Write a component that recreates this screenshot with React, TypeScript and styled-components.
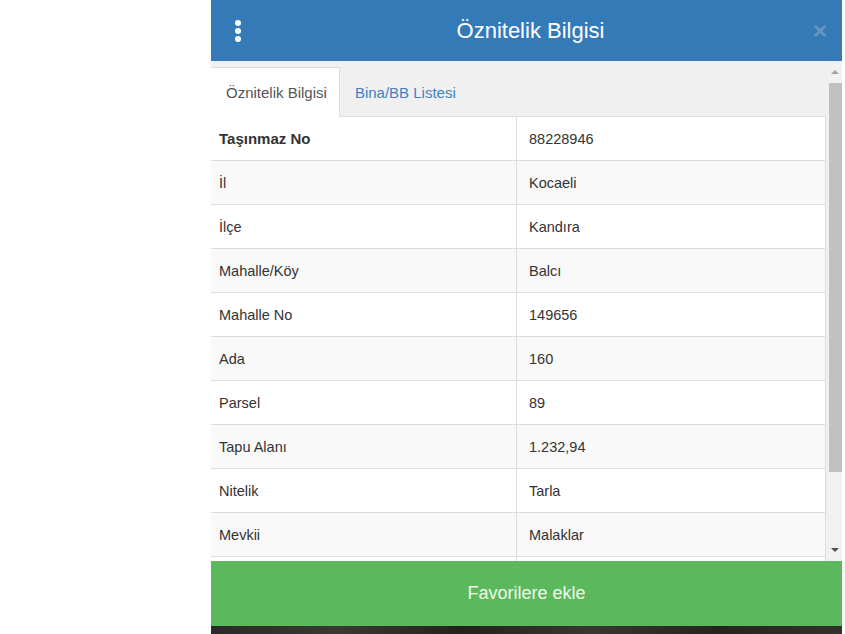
import React from "react";
import styled, { createGlobalStyle } from "styled-components";

const GlobalStyle = createGlobalStyle`
  html, body {
    margin: 0;
    padding: 0;
    background: #fff;
    font-family: "Liberation Sans", Arial, sans-serif;
  }
`;

const Page = styled.div`
  display: flex;
  padding-left: 211px;
  width: 845px;
  height: 634px;
  box-sizing: border-box;
`;

const Panel = styled.div`
  width: 631px;
  display: flex;
  flex-direction: column;
`;

const Header = styled.div`
  height: 61px;
  flex-shrink: 0;
  background: #337ab7;
  display: flex;
  align-items: center;
  padding: 0 12px 0 22px;
`;

const Dots = styled.div`
  display: flex;
  flex-direction: column;
  gap: 2px;
  width: 10px;
  align-items: center;
`;

const Dot = styled.span`
  width: 6px;
  height: 6px;
  border-radius: 50%;
  background: #fff;
`;

const Title = styled.div`
  flex: 1;
  text-align: center;
  color: #fff;
  font-size: 22px;
  line-height: 1;
  margin-left: 8px;
`;

const Close = styled.div`
  width: 20px;
  color: #6b95c2;
  font-size: 24px;
  font-weight: bold;
  line-height: 1;
  text-align: center;
`;

const Body = styled.div`
  height: 500px;
  flex-shrink: 0;
  display: flex;
  background: #f0f0f0;
  overflow: hidden;
`;

const Content = styled.div`
  flex: 1;
  display: flex;
  flex-direction: column;
  padding-right: 2px;
`;

const TabBar = styled.div`
  height: 55px;
  flex-shrink: 0;
  box-sizing: border-box;
  padding-top: 6px;
  display: flex;
  align-items: stretch;
`;

const Tab = styled.div<{ $active?: boolean }>`
  padding: 0 12px 0 15px;
  display: flex;
  align-items: center;
  font-size: 15px;
  color: ${(p) => (p.$active ? "#555" : "#3f82bf")};
  background: ${(p) => (p.$active ? "#fff" : "transparent")};
  border: 1px solid ${(p) => (p.$active ? "#ddd" : "transparent")};
  border-left: none;
  border-bottom: none;
  margin-bottom: -1px;
  position: relative;
  z-index: 1;
`;

const Table = styled.div`
  flex-shrink: 0;
  background: #fff;
  border-top: 1px solid #ddd;
  border-right: 1px solid #ddd;
`;

const Row = styled.div<{ $striped?: boolean }>`
  display: grid;
  grid-template-columns: 305px 1fr;
  height: 44px;
  box-sizing: border-box;
  border-bottom: 1px solid #ddd;
  background: ${(p) => (p.$striped ? "#f9f9f9" : "#fff")};
`;

const Cell = styled.div<{ $bold?: boolean; $value?: boolean }>`
  display: flex;
  align-items: center;
  padding-left: ${(p) => (p.$value ? "12px" : "8px")};
  font-size: ${(p) => (p.$bold ? "15px" : "14.5px")};
  color: #333;
  font-weight: ${(p) => (p.$bold ? "bold" : "normal")};
  border-left: ${(p) => (p.$value ? "1px solid #ddd" : "none")};
`;

const Scrollbar = styled.div`
  width: 14px;
  flex-shrink: 0;
  background: #f1f1f1;
  display: flex;
  flex-direction: column;
  align-items: center;
`;

const Arrow = styled.div<{ $down?: boolean }>`
  height: 22px;
  flex-shrink: 0;
  display: flex;
  align-items: center;
  justify-content: center;
  &::after {
    content: "";
    border-left: 4px solid transparent;
    border-right: 4px solid transparent;
    ${(p) =>
      p.$down
        ? "border-top: 4px solid #505050;"
        : "border-bottom: 4px solid #a3a3a3;"}
  }
`;

const Thumb = styled.div`
  width: 13px;
  height: 389px;
  flex-shrink: 0;
  margin-left: 1px;
  background: #c1c1c1;
`;

const Track = styled.div`
  flex: 1;
`;

const AddButton = styled.div`
  height: 65px;
  flex-shrink: 0;
  background: #5cb85c;
  color: #eef8ea;
  font-size: 18px;
  display: flex;
  align-items: center;
  justify-content: center;
`;

const MapStrip = styled.div`
  height: 8px;
  flex-shrink: 0;
  background: linear-gradient(90deg, #2b2a28 0%, #3b3835 20%, #24211f 40%, #3a3733 60%, #262321 80%, #34312d 100%);
`;

const rows: [string, string][] = [
  ["İl", "Kocaeli"],
  ["İlçe", "Kandıra"],
  ["Mahalle/Köy", "Balcı"],
  ["Mahalle No", "149656"],
  ["Ada", "160"],
  ["Parsel", "89"],
  ["Tapu Alanı", "1.232,94"],
  ["Nitelik", "Tarla"],
  ["Mevkii", "Malaklar"],
  ["", ""],
];

const App = () => {
  return (
    <Page>
      <GlobalStyle />
      <Panel>
        <Header>
          <Dots>
            <Dot />
            <Dot />
            <Dot />
          </Dots>
          <Title>Öznitelik Bilgisi</Title>
          <Close>×</Close>
        </Header>
        <Body>
          <Content>
            <TabBar>
              <Tab $active>Öznitelik Bilgisi</Tab>
              <Tab>Bina/BB Listesi</Tab>
            </TabBar>
            <Table>
              <Row>
                <Cell $bold>Taşınmaz No</Cell>
                <Cell $value>88228946</Cell>
              </Row>
              {rows.map(([label, value], i) => (
                <Row key={i} $striped={i % 2 === 0}>
                  <Cell>{label}</Cell>
                  <Cell $value>{value}</Cell>
                </Row>
              ))}
            </Table>
          </Content>
          <Scrollbar>
            <Arrow />
            <Thumb />
            <Track />
            <Arrow $down />
          </Scrollbar>
        </Body>
        <AddButton>Favorilere ekle</AddButton>
        <MapStrip />
      </Panel>
    </Page>
  );
};

export default App;
